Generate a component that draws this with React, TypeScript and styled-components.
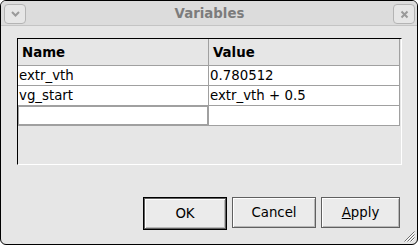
import styled, { createGlobalStyle } from 'styled-components'

const GlobalStyle = createGlobalStyle`
  html, body {
    margin: 0;
    padding: 0;
    background: #ffffff;
  }
  body {
    font-family: "DejaVu Sans", "Liberation Sans", sans-serif;
    font-size: 13.33px;
    color: #000;
  }
`

const Window = styled.div`
  position: relative;
  box-sizing: border-box;
  width: 418px;
  height: 245px;
  border: 1px solid #000;
  border-radius: 6px;
  overflow: hidden;
  background: #e6e6e6;
  display: flex;
  flex-direction: column;
`

const TitleBar = styled.div`
  height: 24px;
  border-bottom: 1px solid #c4c4c4;
  background: #dcdcdc;
  display: flex;
  align-items: center;
  justify-content: space-between;
  padding: 0 2px 0 3px;
`

const TitleText = styled.div`
  flex: 1;
  text-align: center;
  font-weight: bold;
  color: #7c7c7c;
  font-size: 13.33px;
`

const TitleButton = styled.div`
  box-sizing: border-box;
  width: 22px;
  height: 20px;
  margin-top: 2px;
  border: 1px solid #b4b4b4;
  border-radius: 4px;
  background: #e6e6e6;
  display: flex;
  align-items: center;
  justify-content: center;
`

const Body = styled.div`
  flex: 1;
  display: flex;
  flex-direction: column;
  padding: 12px 15px 14px 16px;
`

const TableFrame = styled.div`
  box-sizing: border-box;
  height: 127px;
  border-top: 1px solid #000;
  border-left: 1px solid #000;
  border-right: 1px solid #fff;
  border-bottom: 1px solid #fff;
  background: #e6e6e6;
`

const Row = styled.div<{ $header?: boolean }>`
  display: flex;
  height: ${({ $header }) => ($header ? '27px' : '20px')};
  width: 382px;
`

const Cell = styled.div<{ $header?: boolean; $editing?: boolean }>`
  box-sizing: border-box;
  width: 191px;
  border-right: 1px solid #a0a0a0;
  border-bottom: 1px solid #a0a0a0;
  background: ${({ $header }) => ($header ? '#e6e6e6' : '#ffffff')};
  font-weight: ${({ $header }) => ($header ? 'bold' : 'normal')};
  padding-left: ${({ $header }) => ($header ? '4px' : '1px')};
  display: flex;
  align-items: center;
  white-space: nowrap;
  box-shadow: ${({ $editing }) => ($editing ? 'inset 0 0 0 1px #a0a0a0' : 'none')};
`

const ButtonRow = styled.div`
  margin-top: auto;
  display: flex;
  justify-content: flex-end;
  gap: 5px;
  padding-right: 2px;
`

const DefaultFrame = styled.div`
  border: 1px solid #000;
  display: flex;
`

const Button = styled.button<{ $width: number }>`
  box-sizing: border-box;
  width: ${({ $width }) => $width}px;
  height: 31px;
  margin: 0;
  padding: 0;
  border: 1px solid #606060;
  background: #ebebeb;
  box-shadow: inset 1px 1px 0 #ffffff, inset -1px -1px 0 #b8b8b8;
  font-family: "DejaVu Sans", "Liberation Sans", sans-serif;
  font-size: 13.33px;
  color: #000;
`

const Mnemonic = styled.span`
  text-decoration: underline;
`

const Grip = styled.svg`
  position: absolute;
  right: 2px;
  bottom: 2px;
`

const rows = [
  { name: 'extr_vth', value: '0.780512' },
  { name: 'vg_start', value: 'extr_vth + 0.5' },
]

export default function App() {
  return (
    <>
      <GlobalStyle />
      <Window>
        <TitleBar>
          <TitleButton>
            <svg width="9" height="6" viewBox="0 0 9 6">
              <path d="M1 1 L4.5 4.5 L8 1" stroke="#9a9a9a" strokeWidth="2" fill="none" />
            </svg>
          </TitleButton>
          <TitleText>Variables</TitleText>
          <TitleButton>
            <svg width="9" height="9" viewBox="0 0 9 9">
              <path d="M1.5 1.5 L7.5 7.5 M7.5 1.5 L1.5 7.5" stroke="#9a9a9a" strokeWidth="2" />
            </svg>
          </TitleButton>
        </TitleBar>
        <Body>
          <TableFrame>
            <Row $header>
              <Cell $header>Name</Cell>
              <Cell $header>Value</Cell>
            </Row>
            {rows.map(({ name, value }) => (
              <Row key={name}>
                <Cell>{name}</Cell>
                <Cell>{value}</Cell>
              </Row>
            ))}
            <Row>
              <Cell $editing />
              <Cell />
            </Row>
          </TableFrame>
          <ButtonRow>
            <DefaultFrame>
              <Button $width={82}>OK</Button>
            </DefaultFrame>
            <Button $width={84}>Cancel</Button>
            <Button $width={79}>
              <Mnemonic>A</Mnemonic>pply
            </Button>
          </ButtonRow>
        </Body>
        <Grip width="11" height="11" viewBox="0 0 11 11">
          <path d="M10.5 0.5 L0.5 10.5 M10.5 3.5 L3.5 10.5 M10.5 6.5 L6.5 10.5" stroke="#6e6e6e" strokeWidth="1" />
          <path d="M10.5 1.5 L1.5 10.5 M10.5 4.5 L4.5 10.5 M10.5 7.5 L7.5 10.5" stroke="#ffffff" strokeWidth="1" />
        </Grip>
      </Window>
    </>
  )
}
